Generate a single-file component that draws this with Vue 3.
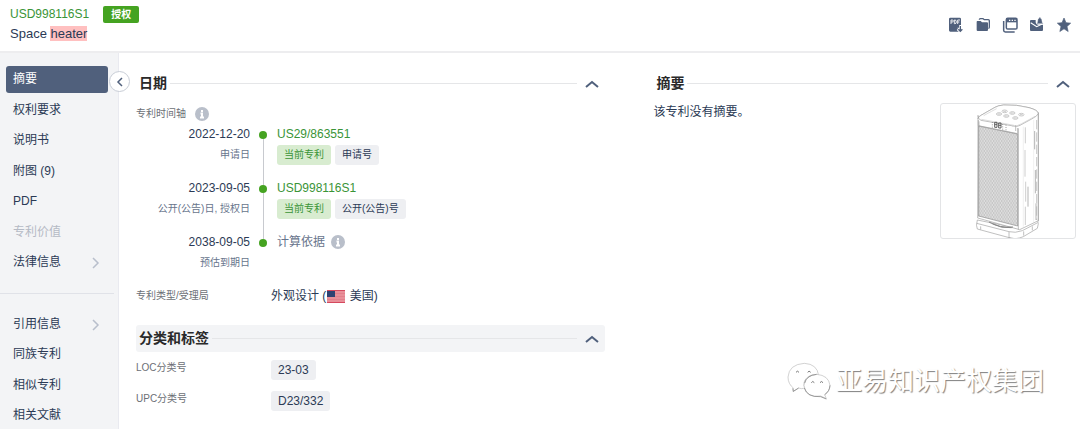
<script setup>
const primaryNav = [
  { text: '摘要', active: true },
  { text: '权利要求' },
  { text: '说明书' },
  { text: '附图 (9)' },
  { text: 'PDF' },
  { text: '专利价值', disabled: true },
  { text: '法律信息', more: true },
]
const secondaryNav = [
  { text: '引用信息', more: true },
  { text: '同族专利' },
  { text: '相似专利' },
  { text: '相关文献' },
]
const timeline = [
  { date: '2022-12-20', kind: '申请日', number: 'US29/863551', tag: '申请号' },
  { date: '2023-09-05', kind: '公开(公告)日, 授权日', number: 'USD998116S1', tag: '公开(公告)号' },
  { date: '2038-09-05', kind: '预估到期日', basis: '计算依据' },
]
const classes = [
  { label: 'LOC分类号', value: '23-03' },
  { label: 'UPC分类号', value: 'D23/332' },
]
</script>

<template>
  <div class="page">
    <header class="topbar">
      <div class="heading">
        <div class="number-line">
          <a href="#" class="number">USD998116S1</a>
          <span class="status">授权</span>
        </div>
        <h1 class="name">Space <mark>heater</mark></h1>
      </div>
      <div class="actions">
        <button type="button" aria-label="PDF">
          <svg viewBox="51 51 48 48">
            <path d="M58 53h28q4 0 4 4v18h-5v8h-6l7 12H58q-4 0-4-4V57q0-4 4-4z" fill="#50607c" />
            <path d="M60 72v-12h4q3 0 3 3t-3 3h-4M70 60v11h2q4 0 4-5.500t-4-5.500zM80 72V60h7M80 66h5" fill="none" stroke="#fff" stroke-width="2.600" />
            <path d="M88 77v17M80 87l8 8 8-8" fill="none" stroke="#fff" stroke-width="8" />
            <path d="M88 78v14M82 88l6 6 6-6" fill="none" stroke="#50607c" stroke-width="4" />
          </svg>
        </button>
        <button type="button" aria-label="文件夹">
          <svg viewBox="130 51 48 48">
            <path d="M143 59q0-3 3-3h8l4 3h12q3 0 3 3v20q0 3-3 3" fill="none" stroke="#50607c" stroke-width="4" />
            <path d="M137 63h10l4 4h15q3 0 3 3v20q0 3-3 3h-28q-3 0-3-3V66q0-3 2-3z" fill="#50607c" />
          </svg>
        </button>
        <button type="button" aria-label="窗口">
          <svg viewBox="213 51 48 48">
            <path d="M218 63v28q0 5 5 5h28" fill="none" stroke="#50607c" stroke-width="4.500" />
            <rect x="226" y="55" width="32" height="32" rx="4" fill="#fff" stroke="#50607c" stroke-width="4.500" />
            <path d="M226 56h32v11h-32z" fill="#50607c" />
            <path d="M234 61h4M242 61h4M250 61h4" stroke="#fff" stroke-width="4" />
          </svg>
        </button>
        <button type="button" aria-label="收件箱">
          <svg viewBox="297 51 48 48">
            <path d="M303 60h14v7q0 7 7 7h15v16q0 3-3 3h-33q-3 0-3-3V63q0-3 3-3z" fill="#50607c" />
            <path d="M302 68l18 12 18-9" fill="none" stroke="#fff" stroke-width="3.500" />
            <path d="M319 71q4-2 4-8 0-6 4-8 0-3 2.500-3t2.500 3q4 2 4 8 0 6 4 8z" fill="#50607c" stroke="#fff" stroke-width="1" />
          </svg>
        </button>
        <button type="button" aria-label="收藏">
          <svg viewBox="378 51 48 48">
            <path d="M402 54l6 14 14 1.500-11 10 3.500 15-12.500-8-12.500 8 3.500-15-11-10 14-1.500z" fill="#50607c" stroke="#50607c" stroke-width="2" stroke-linejoin="round" />
          </svg>
        </button>
      </div>
    </header>

    <div class="body">
      <aside class="sidebar">
        <nav>
          <ul class="nav-list primary">
            <li v-for="item in primaryNav" :key="item.text">
              <a href="#" class="nav-item" :class="{ active: item.active, disabled: item.disabled }">
                <span>{{ item.text }}</span>
                <svg v-if="item.more" class="more" viewBox="0 0 8 12"><path d="M1 1l5 5-5 5" /></svg>
              </a>
            </li>
          </ul>
          <hr class="divider" />
          <ul class="nav-list secondary">
            <li v-for="item in secondaryNav" :key="item.text">
              <a href="#" class="nav-item">
                <span>{{ item.text }}</span>
                <svg v-if="item.more" class="more" viewBox="0 0 8 12"><path d="M1 1l5 5-5 5" /></svg>
              </a>
            </li>
          </ul>
        </nav>
        <button type="button" class="fold" aria-label="收起">
          <svg viewBox="0 0 8 10"><path d="M6 1L2 5l4 4" /></svg>
        </button>
      </aside>

      <main class="content">
        <div class="column">
          <section>
            <div class="section-head">
              <h2>日期</h2>
              <span class="rule"></span>
              <button type="button" class="toggle" aria-label="折叠日期">
                <svg viewBox="0 0 14 8"><path d="M1 7l6-5 6 5" /></svg>
              </button>
            </div>
            <div class="field-label timeline-label">
              专利时间轴
              <svg class="info" viewBox="0 0 14 14"><circle cx="7" cy="7" r="7" /><path d="M7 3v2M5.500 6.500H7V10M5 10.500h4" /></svg>
            </div>
            <ol class="timeline">
              <li v-for="event in timeline" :key="event.date" class="event">
                <div class="when">
                  <time>{{ event.date }}</time>
                  <span class="kind">{{ event.kind }}</span>
                </div>
                <span class="track"></span>
                <div class="what">
                  <template v-if="event.number">
                    <a href="#" class="number">{{ event.number }}</a>
                    <div class="tags">
                      <span class="tag current">当前专利</span>
                      <span class="tag">{{ event.tag }}</span>
                    </div>
                  </template>
                  <span v-else class="basis">
                    {{ event.basis }}
                    <svg class="info" viewBox="0 0 14 14"><circle cx="7" cy="7" r="7" /><path d="M7 3v2M5.500 6.500H7V10M5 10.500h4" /></svg>
                  </span>
                </div>
              </li>
            </ol>
            <dl class="fields type-field">
              <dt class="field-label">专利类型/受理局</dt>
              <dd class="origin">
                外观设计 (<svg class="flag" viewBox="0 0 18 13">
                  <path d="M0 0h18v13H0z" fill="#e88f99" />
                  <path d="M0 .5h18M0 12.500h18" stroke="#d5495e" />
                  <path d="M0 3.500h18M0 6.500h18M0 9.500h18" stroke="#dd7583" stroke-width=".6" />
                  <path d="M0 1h8v6H0z" fill="#2f4272" />
                </svg>&nbsp;美国)
              </dd>
            </dl>
          </section>

          <section>
            <div class="section-head shaded">
              <h2>分类和标签</h2>
              <span class="rule"></span>
              <button type="button" class="toggle" aria-label="折叠分类和标签">
                <svg viewBox="0 0 14 8"><path d="M1 7l6-5 6 5" /></svg>
              </button>
            </div>
            <dl class="fields class-fields">
              <template v-for="row in classes" :key="row.label">
                <dt class="field-label">{{ row.label }}</dt>
                <dd><span class="tag code">{{ row.value }}</span></dd>
              </template>
            </dl>
          </section>
        </div>

        <section class="column">
          <div class="section-head">
            <h2>摘要</h2>
            <span class="rule"></span>
            <button type="button" class="toggle" aria-label="折叠摘要">
              <svg viewBox="0 0 14 8"><path d="M1 7l6-5 6 5" /></svg>
            </button>
          </div>
          <div class="abstract">
            <p>该专利没有摘要。</p>
            <div class="figure">
              <svg viewBox="36 132 402 402" role="img" aria-label="Space heater">
                <defs>
                  <pattern id="mesh" width="8" height="12" patternUnits="userSpaceOnUse">
                    <path d="M0 0h8v12H0z" fill="#dedede" />
                    <path d="M0 0h4v6H0zM4 6h4v6H4z" fill="#c6c6c6" />
                  </pattern>
                </defs>
                <g fill="#fff" stroke="#a0a0a0" stroke-width="2" stroke-linejoin="round">
                  <path d="M145 480q-5 18 0 27l92 25q8 4 22 4 12-1 24-6l42-25q5-12 1-26l-54 27z" />
                  <path d="M143 490l97 25q18 5 40-3l46-24M155 499v10M240 516v17l18 3M284 514v13M310 499v12" fill="none" />
                  <path d="M147 176q1-6 9-10l42-24q10-6 26-7 40-2 76 8 26 7 28 17v322l-56 27-126-35z" />
                  <path d="M147 176q1-6 9-10l42-24q10-6 26-7 40-2 76 8 26 7 28 17-2 8-20 17l-35 19q-7 5-20 2l-97-17q-9-3-9-15z" />
                  <path d="M150 184v286M268 205v304M328 158v325" />
                  <path d="M157 178l98 18M203 146q-12 6-39 21M250 199q12 1 28-8l40-22" fill="none" stroke="#ccc" />
                  <path d="M149 198l117 24v276l-117-30z" fill="url(#mesh)" stroke="#8c8c8c" />
                  <path d="M148 180v17l118 24v-17M260 196v17" fill="none" />
                </g>
                <g fill="none" stroke="#b0b0b0" stroke-width="2">
                  <ellipse cx="227" cy="154" rx="8" ry="4" />
                  <ellipse cx="250" cy="159" rx="8" ry="4" />
                  <ellipse cx="277" cy="164" rx="8" ry="4" />
                  <ellipse cx="210" cy="162" rx="8" ry="4" />
                  <ellipse cx="232" cy="168" rx="8" ry="4" />
                  <ellipse cx="259" cy="174" rx="8" ry="4" />
                  <path d="M223 154h8M246 159h8M273 164h8M206 162h8M228 168h8M255 174h8" />
                </g>
                <g fill="none" stroke="#444" stroke-width="2.500">
                  <path d="M197 187h7v15h-7zM197 194h7M209 189h7v15h-7zM209 196h7" />
                  <path d="M190 186v18M221 192v18M231 194v18" stroke="#888" stroke-dasharray="3 4" />
                </g>
                <g fill="none" stroke="#b5b5b5" stroke-width="3">
                  <path d="M289 202v48M288 270v80M290 365v60M289 440v55" stroke-width="2" />
                  <path d="M283 200v300M314 180v310" stroke="#d2d2d2" stroke-width="1" />
                  <path d="M297 380v60M317 213v55M319 330v70M321 430v50" />
                  <path d="M323 180v300" stroke="#aaa" stroke-dasharray="28 9" stroke-width="2" />
                </g>
                <path d="M180 486q32 19 72 15M190 491q26 15 58 12" fill="none" stroke="#888" stroke-width="3" />
              </svg>
            </div>
          </div>
        </section>
      </main>
    </div>

    <div class="watermark">
      <svg viewBox="46 63 132 114">
        <g fill="#fff" stroke="#bbb" stroke-width="2">
          <path d="M66 142q-17-13-17-34 3-38 49-41 39 2 43 37-22-7-36 7-13 13-6 30-9 4-18 0l-17 11z" />
          <path d="M97 133q3-30 38-33 36 3 40 33-1 18-16 28l5 12-17-8q-46 8-50-32z" />
          <path d="M73 94q4-7 9 0M108 94q4-7 9 0M119 125q4-7 9 0M145 125q4-7 9 0" fill="none" stroke="#777" stroke-width="3" />
          <path d="M63 142l2 9 16-10M98 141q9 28 49 26l17 7M175 133q-1 18-16 28M99 126q6-23 36-26" fill="none" stroke="#777" stroke-width="2" />
        </g>
      </svg>
      <span>亚易知识产权集团</span>
    </div>
  </div>
</template>

<style>
body {
  margin: 0;
  background: #fff;
}
</style>

<style scoped>
.page {
  position: relative;
  display: flex;
  flex-direction: column;
  min-height: 100vh;
  box-sizing: border-box;
  overflow: hidden;
  font-family: "Liberation Sans", "Noto Sans CJK SC", sans-serif;
  font-size: 12px;
  line-height: 20px;
  color: #2b3a55;
}
button {
  display: flex;
  padding: 0;
  border: 0;
  background: none;
  cursor: pointer;
}
a {
  color: inherit;
  text-decoration: none;
}
ul, ol, dl, dd, p, h1, h2 {
  margin: 0;
  padding: 0;
  list-style: none;
}
.topbar {
  display: flex;
  justify-content: space-between;
  align-items: center;
  padding: 4px 8px 7px 10px;
  border-bottom: 2px solid #ededef;
}
.number-line {
  display: flex;
  align-items: center;
  gap: 14px;
}
a.number {
  color: #3a9437;
}
.status {
  padding: 0 8px;
  border-radius: 2px;
  background: #45a321;
  color: #fff;
  font-size: 10px;
  font-weight: 700;
  line-height: 17px;
}
.name {
  font-size: 13px;
  font-weight: 400;
}
.name mark {
  background: #ffc0c0;
  color: inherit;
}
.actions {
  display: flex;
  gap: 11px;
  padding-top: 2px;
}
.actions svg {
  width: 16px;
  height: 16px;
}
.body {
  flex: 1;
  display: flex;
}
.sidebar {
  position: relative;
  flex: none;
  width: 118px;
  border-right: 1px solid #e9eaf0;
  background: #f3f4f6;
}
.nav-list {
  display: flex;
  flex-direction: column;
  justify-content: space-between;
  padding: 0 10px 0 6px;
}
.primary {
  min-height: 210px;
  margin-top: 13px;
}
.secondary {
  min-height: 118px;
}
.nav-item {
  display: flex;
  align-items: center;
  justify-content: space-between;
  padding: 0 8px 0 7px;
  border-radius: 3px;
  line-height: 27px;
}
.active {
  background: #50607c;
  color: #fff;
}
.disabled {
  color: #b5bac5;
}
.more {
  width: 8px;
  height: 12px;
  fill: none;
  stroke: #b8bfcc;
  stroke-width: 1.5;
}
.divider {
  margin: 17px 4px 17px 0;
  border: 0;
  border-top: 1px solid #e0e2e8;
}
.fold {
  position: absolute;
  top: 18px;
  right: -12px;
  width: 21px;
  height: 21px;
  align-items: center;
  justify-content: center;
  border: 1px solid #c8cdd6;
  border-radius: 50%;
  background: #fff;
}
.fold svg {
  width: 8px;
  height: 10px;
  fill: none;
  stroke: #50607c;
  stroke-width: 1.5;
}
.content {
  flex: 1;
  display: grid;
  grid-template-columns: 10fr 9fr;
  gap: 48px;
  padding: 17px 4px 0 17px;
}
.section-head {
  display: flex;
  align-items: center;
  gap: 3px;
  padding: 0 6px 0 3px;
  border-radius: 3px;
  line-height: 27px;
}
.shaded {
  background: #f3f4f6;
}
.section-head h2 {
  font-size: 14px;
  font-weight: 700;
  color: #2a2a2a;
}
.rule {
  flex: 1;
  height: 1px;
  margin-right: 5px;
  background: #e5e6e8;
}
.toggle svg {
  width: 14px;
  height: 8px;
  fill: none;
  stroke: #50607c;
  stroke-width: 2;
}
.field-label {
  color: #6c6f76;
  font-size: 10px;
}
.timeline-label {
  display: flex;
  align-items: center;
  gap: 9px;
  margin-top: 7px;
}
.info {
  width: 14px;
  height: 14px;
  fill: #b9bfca;
}
.info path {
  fill: none;
  stroke: #fff;
  stroke-width: 2;
}
.event {
  display: grid;
  grid-template-columns: 114px 26px 1fr;
  min-height: 54px;
}
.when {
  display: flex;
  flex-direction: column;
  align-items: flex-end;
  gap: 1px;
}
.kind {
  font-size: 10px;
  color: #68758c;
}
.track {
  display: flex;
  flex-direction: column;
  align-items: center;
  margin-top: 7px;
  margin-bottom: -7px;
}
.track::before {
  content: "";
  width: 8px;
  height: 8px;
  border-radius: 50%;
  background: #45a321;
}
.track::after {
  content: "";
  flex: 1;
  width: 1px;
  background: #c8cacf;
}
.event:last-child .track::after {
  display: none;
}
.what {
  padding-left: 1px;
}
.tags {
  display: flex;
  gap: 4px;
  margin-top: 1px;
}
.tag {
  display: inline-block;
  padding: 0 7px;
  border-radius: 3px;
  background: #eeeff2;
  font-size: 10px;
}
.current {
  background: #d8ecd0;
  color: #3a9437;
}
.basis {
  display: flex;
  align-items: center;
  gap: 6px;
  color: #68758c;
}
.fields {
  display: grid;
  grid-template-columns: 135px 1fr;
}
.type-field {
  margin: 0 0 19px;
}
.origin {
  display: flex;
  align-items: center;
}
.flag {
  width: 18px;
  height: 13px;
  margin: 0 1px;
}
.class-fields {
  row-gap: 11px;
  margin-top: 8px;
}
.class-fields dt {
  line-height: 16px;
}
.class-fields dd {
  display: flex;
}
.code {
  font-size: 12px;
}
.abstract {
  display: flex;
  justify-content: space-between;
  align-items: flex-start;
  margin-top: 6px;
}
.abstract p {
  line-height: 18px;
}
.figure {
  display: flex;
  border: 1px solid #e3e4e6;
  border-radius: 3px;
}
.figure svg {
  width: 134px;
  height: 134px;
}
.watermark {
  position: absolute;
  right: 36px;
  bottom: 29px;
  display: flex;
  align-items: center;
  gap: 5px;
  color: #fff;
  font-size: 26px;
  line-height: 38px;
  text-shadow: 1px 1px 1px #808080;
}
.watermark svg {
  width: 44px;
  height: 38px;
}
</style>
